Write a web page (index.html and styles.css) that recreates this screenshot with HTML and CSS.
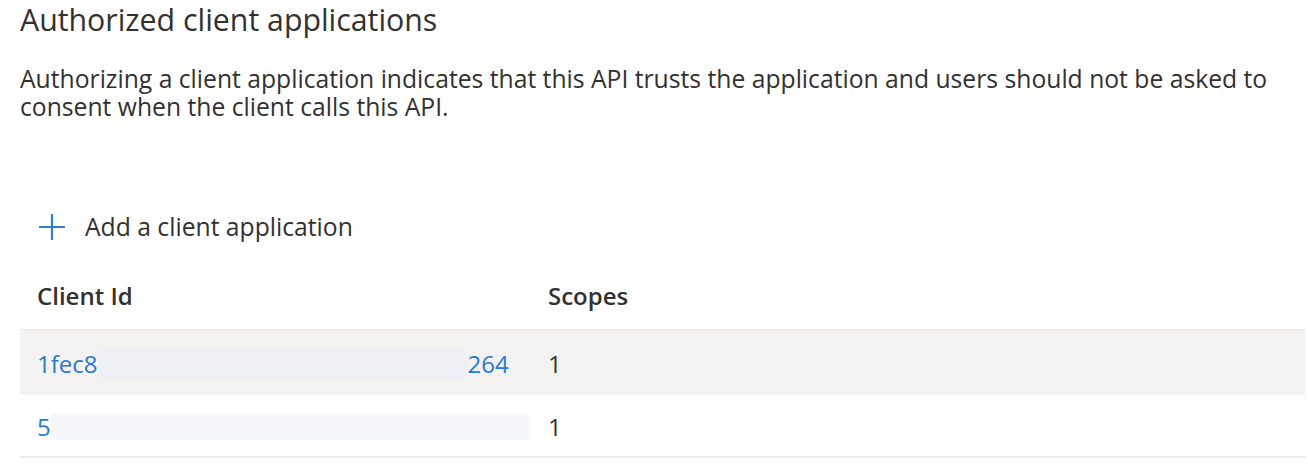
FILE: index.html
```html
<!DOCTYPE html>
<html>
<head>
<meta charset="utf-8">
<link rel="stylesheet" href="styles.css">
</head>
<body>
<div class="page">
  <h2 class="title">Authorized client applications</h2>
  <p class="desc">Authorizing a client application indicates that this API trusts the application and users should not be asked to consent when the client calls this API.</p>
  <button class="add">
    <svg class="plus" width="28" height="28" viewBox="0 0 28 28"><path d="M14 1v26M1 14h26" stroke="#2f7fd0" stroke-width="2.2" fill="none"/></svg>
    <span>Add a client application</span>
  </button>
  <div class="table">
    <div class="row head">
      <div class="c1">Client Id</div>
      <div class="c2">Scopes</div>
    </div>
    <div class="row data shaded">
      <div class="c1"><span class="id">1fec8</span><span class="mask m1"></span><span class="id">264</span></div>
      <div class="c2">1</div>
    </div>
    <div class="row data last">
      <div class="c1"><span class="id">5</span><span class="mask m2"></span></div>
      <div class="c2">1</div>
    </div>
  </div>
</div>
</body>
</html>
```
FILE: styles.css
```css
html, body { margin: 0; padding: 0; background: #ffffff; }
body { font-family: "Open Sans", "Noto Sans", sans-serif; color: #323130; }
.page { padding: 0 3px 0 20px; }
.title { margin: 0; font-size: 30.3px; font-weight: 400; line-height: 40px; }
.desc { margin: 25px 0 0; font-size: 24.7px; line-height: 28px; max-width: 1262px; }
.add { display: flex; align-items: center; gap: 19px; height: 30px; margin: 91px 0 0 18px; padding: 0; border: 0; background: none; font: inherit; font-size: 24.7px; line-height: 30px; color: #323130; }
.plus { display: block; }
.table { margin-top: 20px; }
.row { display: flex; align-items: center; line-height: 30px; font-size: 24px; }
.head { height: 67px; font-weight: 600; }
.shaded { padding-top: 3px; box-sizing: border-box; height: 66px; background: #f3f2f1; border-top: 1px solid #ebe9e7; }
.last { height: 63px; padding-top: 2px; box-sizing: border-box; border-bottom: 2px solid #edebe9; }
.c1 { width: 511px; padding-left: 17px; display: flex; align-items: center; }
.id { color: #2b79d0; }
.mask { display: inline-block; }
.m1 { width: 370px; height: 30px; background: #eff0f5; }
.m2 { width: 479px; height: 26px; background: #f6f7fa; }
```
